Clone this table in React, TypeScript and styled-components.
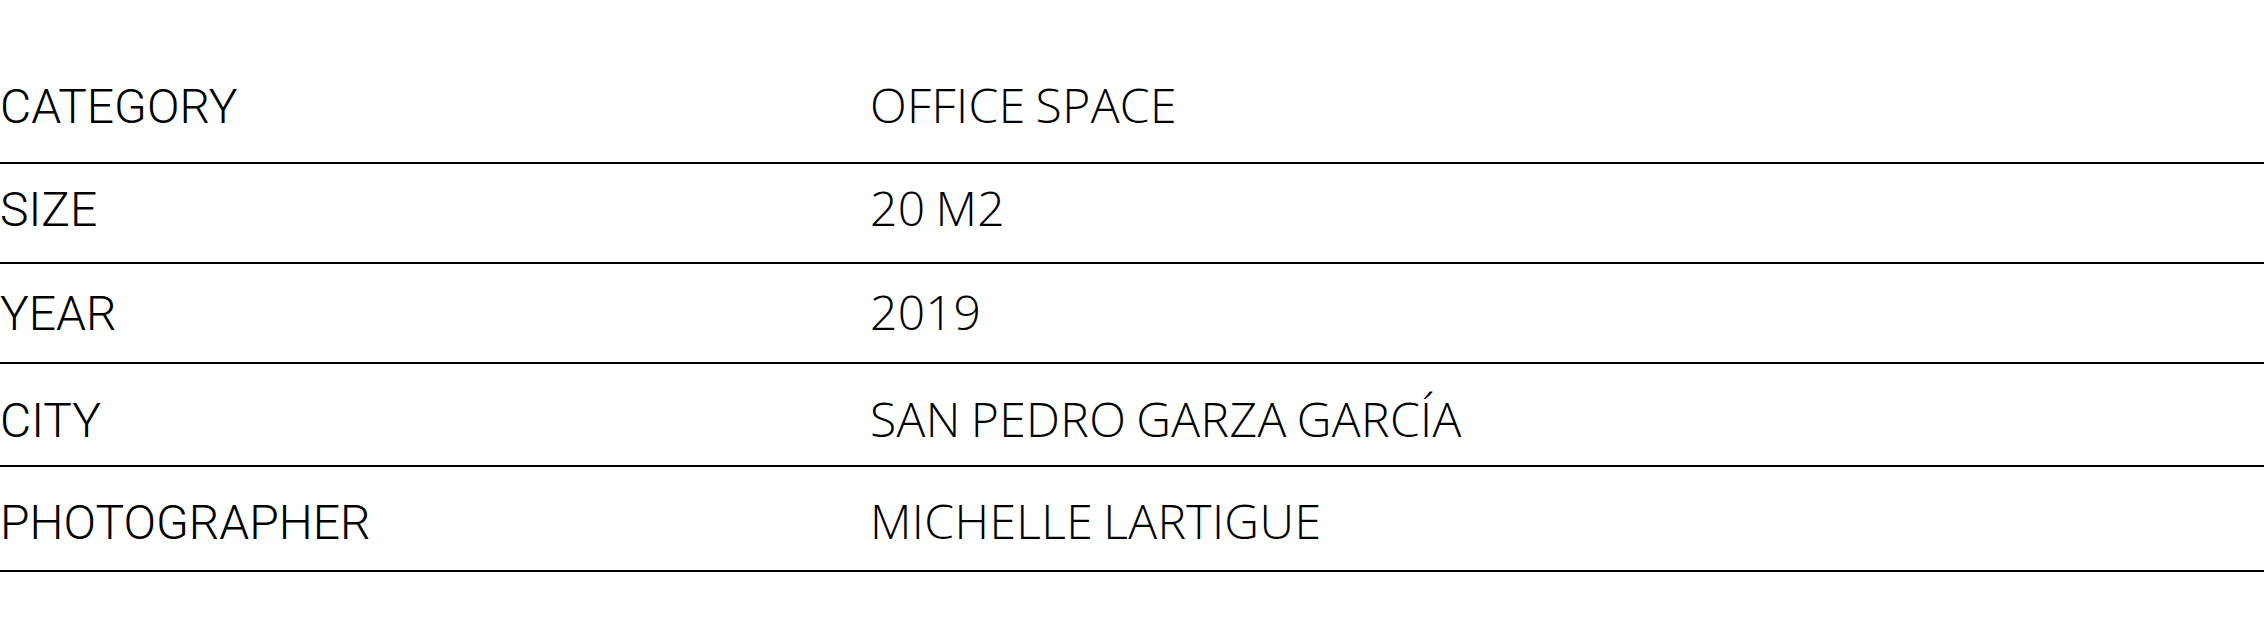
import React from 'react'
import styled, { createGlobalStyle } from 'styled-components'

const GlobalStyle = createGlobalStyle`
  html, body {
    margin: 0;
    padding: 0;
    background: #ffffff;
  }
  body {
    font-family: Roboto, "Liberation Sans", Arial, sans-serif;
    color: #000000;
  }
`

const rows = [
  { label: 'CATEGORY', value: 'OFFICE SPACE', top: 25, bottom: 31 },
  { label: 'SIZE', value: '20 M2', top: 20, bottom: 28 },
  { label: 'YEAR', value: '2019', top: 24, bottom: 24 },
  { label: 'CITY', value: 'SAN PEDRO GARZA GARCÍA', top: 31, bottom: 20 },
  { label: 'PHOTOGRAPHER', value: 'MICHELLE LARTIGUE', top: 30, bottom: 23 },
]

export default function App() {
  return (
    <>
      <GlobalStyle />
      <Details>
        {rows.map((row) => (
          <Row key={row.label} $top={row.top} $bottom={row.bottom}>
            <Label>{row.label}</Label>
            <Value>{row.value}</Value>
          </Row>
        ))}
      </Details>
    </>
  )
}

const Details = styled.dl`
  margin: 0;
  padding-top: 56px;
  width: 2264px;
`

const Row = styled.div<{ $top: number; $bottom: number }>`
  display: grid;
  grid-template-columns: 870px 1fr;
  align-items: baseline;
  padding: ${(p) => p.$top}px 0 ${(p) => p.$bottom}px;
  border-bottom: 2px solid #000000;
`

const Label = styled.dt`
  margin: 0;
  font-size: 48px;
  font-weight: 300;
  line-height: 48px;
  letter-spacing: 0;
  white-space: nowrap;
`

const Value = styled.dd`
  margin: 0;
  font-family: "Open Sans", "Liberation Sans", Arial, sans-serif;
  font-stretch: 91%;
  font-size: 48px;
  font-weight: 300;
  line-height: 48px;
  letter-spacing: 0.4px;
  word-spacing: -3px;
  white-space: nowrap;
`
